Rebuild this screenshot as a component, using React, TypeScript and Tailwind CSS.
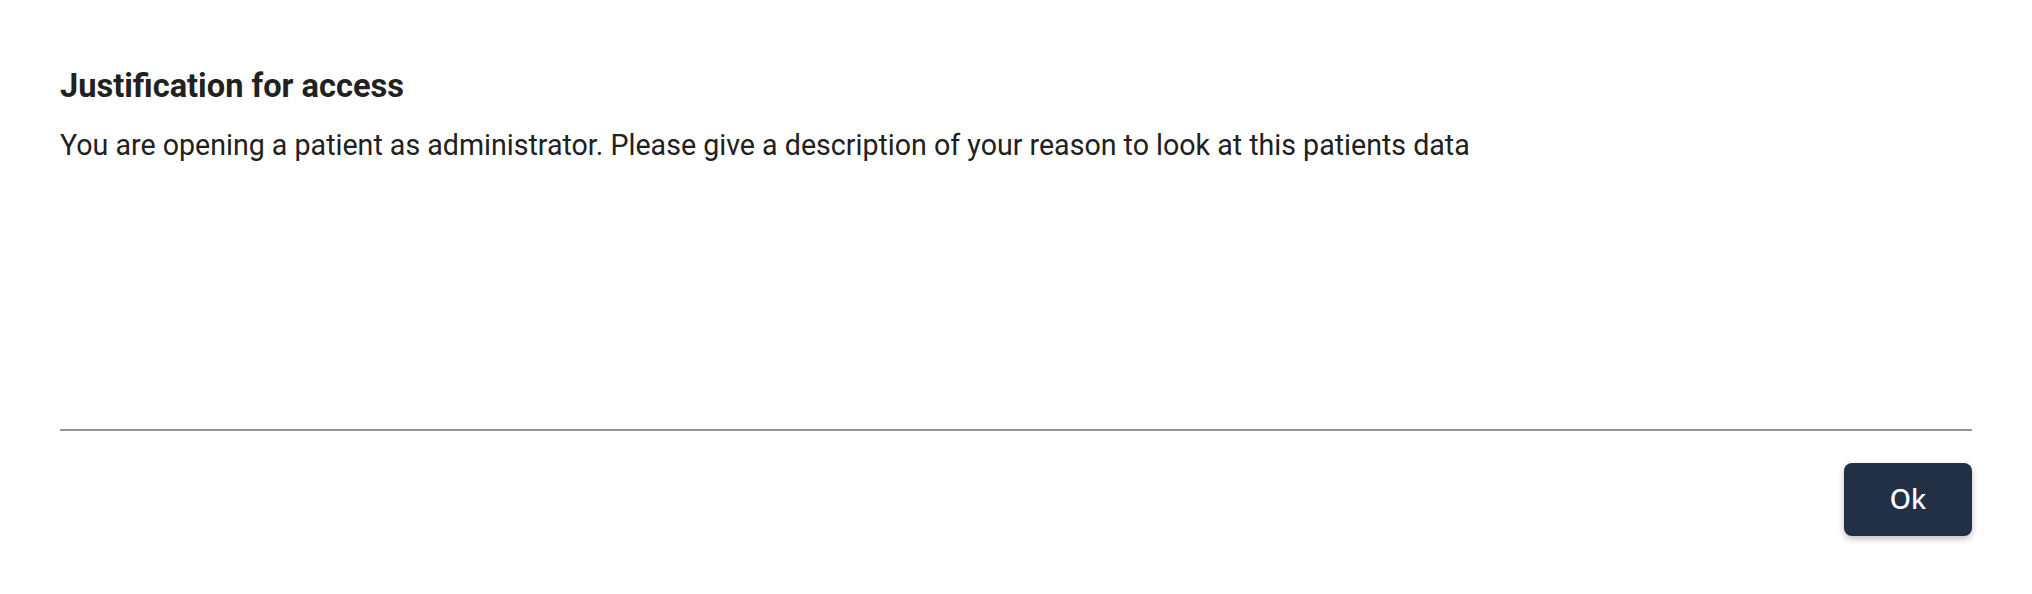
import React, { useState } from 'react';

export default function App() {
  const [reason, setReason] = useState('');

  return (
    <div className="min-h-screen w-full bg-white px-[60px] pt-[66px] font-['Roboto','Liberation_Sans',sans-serif] text-[#212121]">
      <h2 className="text-[32.6px] font-bold leading-[40px]">Justification for access</h2>
      <p className="mt-[21px] text-[28.6px] leading-[36px] text-[#212121]">
        You are opening a patient as administrator. Please give a description of your reason to look at this patients data
      </p>

      <div className="mt-[12px]">
        <textarea
          value={reason}
          onChange={(e) => setReason(e.target.value)}
          className="block h-[254px] w-full resize-none bg-transparent text-[28.6px] outline-none"
        />
        <div className="h-[2px] w-full bg-[#949494]" />
      </div>

      <div className="mt-[32px] flex justify-end">
        <button className="flex h-[73px] w-[128px] items-center justify-center rounded-[8px] bg-[#213045] font-['Noto_Sans',sans-serif] text-[27px] font-medium text-white shadow-[0_3px_6px_rgba(0,0,0,0.25)]">
          Ok
        </button>
      </div>
    </div>
  );
}
